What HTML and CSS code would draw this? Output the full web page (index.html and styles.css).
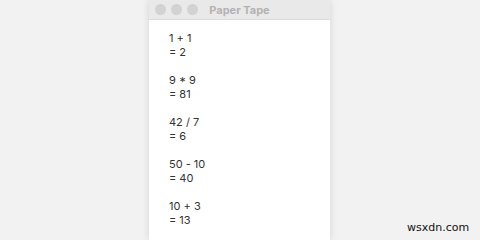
FILE: index.html
```html
<!DOCTYPE html>
<html lang="en">
<head>
    <meta charset="UTF-8">
    <title>Paper Tape</title>
    <link rel="stylesheet" href="styles.css">
</head>
<body>
    <div class="window">
        <div class="title-bar">
            <div class="lights">
                <span class="light"></span>
                <span class="light"></span>
                <span class="light"></span>
            </div>
            <div class="title">Paper Tape</div>
        </div>
        <div class="tape">
            <div class="entry"><div>1 + 1</div><div>= 2</div></div>
            <div class="entry"><div>9 * 9</div><div>= 81</div></div>
            <div class="entry"><div>42 / 7</div><div>= 6</div></div>
            <div class="entry"><div>50 - 10</div><div>= 40</div></div>
            <div class="entry"><div>10 + 3</div><div>= 13</div></div>
        </div>
    </div>
    <div class="watermark">wsxdn.com</div>
</body>
</html>
```
FILE: styles.css
```css
html, body {
    margin: 0;
    height: 240px;
    overflow: hidden;
}
body {
    background-color: #f2f2f2;
    font-family: 'Inter', 'Liberation Sans', sans-serif;
}
.window {
    margin-left: 149px;
    width: 181px;
    height: 240px;
    background-color: white;
    box-shadow: 0 0 8px rgba(0,0,0,0.12);
}
.title-bar {
    position: relative;
    height: 19px;
    background-color: #e9e9e9;
    border-bottom: 1px solid #dcdcdc;
    display: flex;
    align-items: center;
    justify-content: center;
}
.lights {
    position: absolute;
    left: 6px;
    top: 4px;
    display: flex;
    gap: 5px;
}
.light {
    width: 11px;
    height: 11px;
    border-radius: 50%;
    background-color: #d2d2d2;
}
.title {
    font-size: 11px;
    font-weight: bold;
    color: #b3b3b3;
}
.tape {
    padding: 11px 0 0 20px;
    font-size: 11px;
    line-height: 14px;
    color: #333;
}
.entry {
    margin-bottom: 14px;
}
.entry:last-child {
    margin-bottom: 0;
}
.watermark {
    position: absolute;
    left: 407px;
    top: 221px;
    font-family: 'DejaVu Sans', sans-serif;
    font-size: 11px;
    color: #111;
}
```
